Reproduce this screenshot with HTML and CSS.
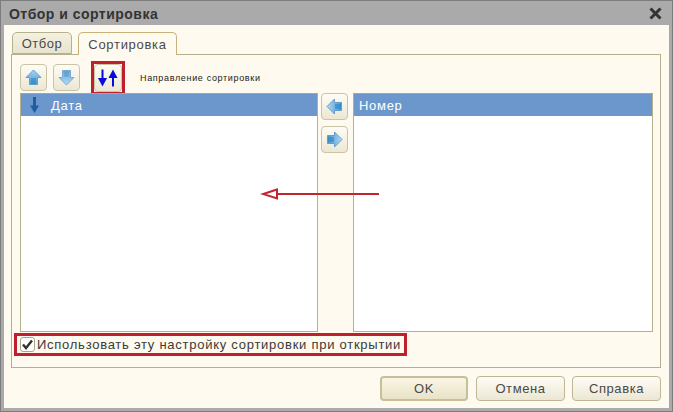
FILE: index.html
```html
<!DOCTYPE html>
<html lang="ru">
<head>
<meta charset="utf-8">
<title>Отбор и сортировка</title>
<link rel="stylesheet" href="styles.css">
</head>
<body>
<svg width="0" height="0" class="defs">
  <defs>
    <linearGradient id="blue" x1="0" y1="0" x2="0" y2="1">
      <stop offset="0" stop-color="#a8d4f2"/>
      <stop offset="1" stop-color="#4a9ad3"/>
    </linearGradient>
    <linearGradient id="bluedown" x1="0" y1="0" x2="0" y2="1">
      <stop offset="0" stop-color="#6dabd9"/>
      <stop offset="1" stop-color="#b3d8f2"/>
    </linearGradient>
    <linearGradient id="blueh" x1="0" y1="0" x2="1" y2="0">
      <stop offset="0" stop-color="#b3d9f4"/>
      <stop offset="1" stop-color="#4494cf"/>
    </linearGradient>
    <linearGradient id="bluer" x1="0" y1="0" x2="1" y2="0">
      <stop offset="0" stop-color="#4494cf"/>
      <stop offset="1" stop-color="#b3d9f4"/>
    </linearGradient>
  </defs>
</svg>
<div class="window">
  <div class="titlebar">
    <span class="title">Отбор и сортировка</span>
    <svg class="close" width="13" height="13" viewBox="0 0 13 13"><path d="M1.500 1.500 11.500 11.500M11.500 1.500 1.500 11.500" stroke="#333" stroke-width="3" fill="none"/></svg>
  </div>
  <div class="client">
    <div class="tabs">
      <div class="tab">Отбор</div>
      <div class="tab active">Сортировка</div>
    </div>
    <div class="panel">
      <div class="toolbar">
        <button class="tool up" type="button" aria-label="Вверх">
          <svg width="17" height="17" viewBox="0 0 17 17"><path d="M8.500 1 16 8.500h-3.500V15.500h-8V8.500H1z" fill="url(#blue)" stroke="#5f9fcf" stroke-width="1"/><path d="M6 9h5v6H6z" fill="#2f86c4" opacity=".6"/></svg>
        </button>
        <button class="tool down" type="button" aria-label="Вниз">
          <svg width="17" height="17" viewBox="0 0 17 17"><path d="M4.500 1.500h8V8.500H16L8.500 16 1 8.500h3.500z" fill="url(#bluedown)" stroke="#78abd2" stroke-width="1"/><path d="M6 2h5v6H6z" fill="#4f97cc" opacity=".5"/></svg>
        </button>
        <div class="mark sortmark">
          <button class="tool sort" type="button" aria-label="Направление сортировки">
            <svg width="21" height="20" viewBox="0 0 21 20"><path d="M4.500 1.500v10" stroke="#0b0bd8" stroke-width="2"/><path d="M0 10h9L4.500 18.500z" fill="#0b0bd8"/><path d="M15 18.500v-10" stroke="#0b0bd8" stroke-width="2"/><path d="M10.500 10h9L15 1.500z" fill="#0b0bd8"/></svg>
          </button>
        </div>
        <span class="hint">Направление сортировки</span>
      </div>
      <div class="columns">
        <div class="list left">
          <div class="row">
            <svg class="rowicon" width="9" height="16" viewBox="0 0 9 16"><path d="M4.500 0v10" stroke="#1d5e9e" stroke-width="3"/><path d="M0 8.500h9L4.500 16z" fill="#1d5e9e"/></svg>
            <span>Дата</span>
          </div>
        </div>
        <div class="mid">
          <button class="tool" type="button" aria-label="Влево">
            <svg width="17" height="17" viewBox="0 0 17 17"><path d="M1 8.500 8.500 1v3.500h7v8h-7V16z" fill="url(#blueh)" stroke="#5f9fcf" stroke-width="1"/><path d="M9 6h6v5H9z" fill="#2f86c4" opacity=".6"/></svg>
          </button>
          <button class="tool" type="button" aria-label="Вправо">
            <svg width="17" height="17" viewBox="0 0 17 17"><path d="M16 8.500 8.500 16v-3.500h-7v-8h7V1z" fill="url(#bluer)" stroke="#5f9fcf" stroke-width="1"/><path d="M2 6h6v5H2z" fill="#2f86c4" opacity=".6"/></svg>
          </button>
        </div>
        <div class="list right">
          <div class="row"><span>Номер</span></div>
        </div>
      </div>
      <label class="mark checkrow">
        <span class="box"><svg width="13" height="11" viewBox="0 0 13 11"><path d="M2 5.500 5 9l6-7.500" stroke="#333" stroke-width="2.400" fill="none"/></svg></span>
        <span class="checktext">Использовать эту настройку сортировки при открытии</span>
      </label>
    </div>
    <div class="actions">
      <button class="btn default" type="button">OK</button>
      <button class="btn" type="button">Отмена</button>
      <button class="btn" type="button">Справка</button>
    </div>
  </div>
  <svg class="arrow" width="120" height="12" viewBox="0 0 120 12"><path d="M119 6H14" stroke="#c2242b" stroke-width="2"/><path d="M17 1.500 3 6l14 4.500z" fill="#fff" stroke="#c2242b" stroke-width="2"/></svg>
</div>
</body>
</html>
```

FILE: styles.css
```css
* { box-sizing: border-box; }
html, body { margin: 0; padding: 0; }
body { width: 673px; height: 412px; overflow: hidden; background: #fff; font-family: "Liberation Sans", Arial, sans-serif; }
.defs { position: absolute; }
.window { position: relative; width: 673px; height: 412px; background: #aaaaaa; border: 1px solid #7d7d7d; padding: 0 3px 3px; display: flex; flex-direction: column; }
.titlebar { height: 24px; flex: none; display: flex; align-items: center; justify-content: space-between; padding: 2px 7px 0 5px; }
.title { font-size: 14px; font-weight: bold; letter-spacing: .48px; color: #333; }
.close { margin-top: -1px; }
.client { flex: 1; background: #fefaef; display: flex; flex-direction: column; padding: 7px 8px 0 7px; }
.tabs { display: flex; gap: 6px; height: 22px; flex: none; position: relative; z-index: 1; padding-left: 1px; }
.tab { width: 60px; height: 22px; background: linear-gradient(#f4f1e2, #e9e4cf); border: 1px solid #b5b08e; border-radius: 5px 5px 0 0; font-size: 13px; letter-spacing: .55px; color: #4a4a4a; display: flex; align-items: center; justify-content: center; padding-top: 1px; }
.tab.active { width: 99px; height: 23px; background: #fefaef; border-color: #c7b27c; border-bottom: 0; letter-spacing: .7px; }
.panel { position: relative; width: 650px; height: 314px; border: 1px solid #b5b08e; flex: none; padding: 7px 7px 0 8px; display: flex; flex-direction: column; }
.toolbar { height: 31px; display: flex; align-items: center; flex: none; }
.tool { width: 27px; height: 27px; padding: 0; border: 1px solid #c9c4a6; border-radius: 4px; background: linear-gradient(#fefcf5, #ece7d3); display: flex; align-items: center; justify-content: center; }
.down { margin-left: 6px; }
.mark { border: 3px solid #c0202c; background: #fefaef; }
.sortmark { margin-left: 11px; width: 34px; height: 34px; display: flex; align-items: center; justify-content: center; margin-top: 1px; }
.sort { width: 28px; height: 28px; }
.hint { font-size: 9px; color: #222; margin-left: 15px; letter-spacing: .66px; }
.columns { display: flex; height: 239px; flex: none; }
.list { background: #fff; border: 1px solid #b5b08e; border-top-color: #a8a68e; }
.left { width: 299px; }
.right { width: 301px; }
.mid { width: 35px; flex: none; display: flex; flex-direction: column; gap: 6px; padding: 0 0 0 3px; background: #fefaef; }
.row { height: 22px; background: #6b97cc; color: #fff; font-size: 13px; letter-spacing: .7px; display: flex; align-items: center; padding-left: 5px; }
.left .row { padding-left: 9px; gap: 12px; }
.rowicon { flex: none; }
.checkrow { margin: 1px 0 0 -6px; width: 393px; height: 23px; display: flex; align-items: center; padding-left: 3px; background: #fefaef; }
.box { width: 15px; height: 15px; border: 1px solid #aaa68c; border-radius: 3px; background: #fff; display: flex; align-items: center; justify-content: center; flex: none; }
.checktext { font-size: 13px; letter-spacing: .74px; color: #3a3a3a; margin-left: 2px; white-space: nowrap; }
.actions { display: flex; justify-content: flex-end; padding: 8px 0 0; }
.btn { width: 89px; height: 25px; padding: 0; margin-left: 7px; border: 1px solid #bdb893; border-radius: 4px; background: linear-gradient(#fefcf5, #ece7d3); font: 13px "Liberation Sans", Arial, sans-serif; letter-spacing: .6px; color: #4a4a4a; }
.btn.default { width: 88px; border: 2px solid #c5c09a; background: linear-gradient(#fbf6e4, #e8e2c6); margin-right: 1px; }
.arrow { position: absolute; left: 259px; top: 187px; }
```
